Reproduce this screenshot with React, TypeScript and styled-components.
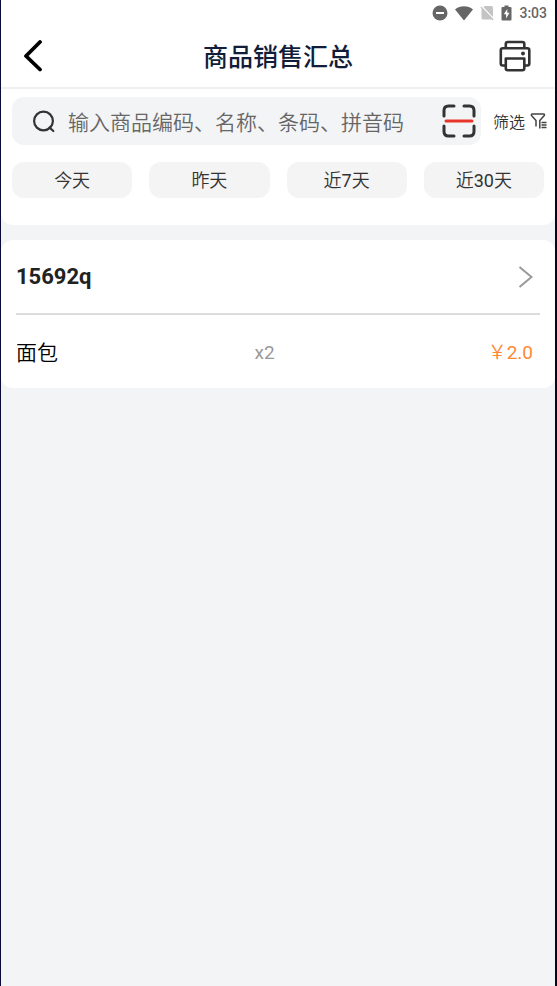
import React from 'react';
import styled, { createGlobalStyle } from 'styled-components';

const GlobalStyle = createGlobalStyle`
  * { box-sizing: border-box; }
  body { margin: 0; background: #f3f4f6; }
  button, input { font: inherit; color: inherit; border: 0; padding: 0; margin: 0; background: none; }
  button { cursor: pointer; }
  svg { display: block; flex: none; }
`;

const Screen = styled.div`
  min-height: 100vh;
  display: flex;
  flex-direction: column;
  border-left: 1px solid #0b0b3a;
  border-right: 2px solid #04061f;
  background: #f3f4f6;
  color: #333;
  font-family: Roboto, 'Noto Sans CJK SC DemiLight', 'Noto Sans CJK SC', sans-serif;
`;

const StatusBar = styled.div`
  display: flex;
  align-items: center;
  justify-content: flex-end;
  height: 25px;
  padding-right: 8px;
  background: #fff;
`;

const StatusIcons = styled.div`
  display: flex;
  align-items: center;
  gap: 7px;
  margin-right: 7px;
`;

const Clock = styled.time`
  font-size: 14px;
  font-weight: 500;
  line-height: 24px;
  padding-top: 1px;
  color: #666;
`;

const Header = styled.header`
  display: grid;
  grid-template-columns: 64px 1fr 64px;
  align-items: center;
  height: 64px;
  padding: 0 8px;
  background: #fff;
  border-bottom: 2px solid #f0f0f2;
`;

const IconButton = styled.button<{ $end?: boolean }>`
  display: flex;
  align-items: center;
  justify-content: ${(p) => (p.$end ? 'flex-end' : 'flex-start')};
  height: 48px;
  padding: 0 16px 0 14px;
`;

const Title = styled.h1`
  margin: 0;
  padding-top: 4px;
  text-align: center;
  font-family: Roboto, 'Noto Sans CJK SC', sans-serif;
  font-size: 25px;
  font-weight: 500;
  line-height: 32px;
  color: #121d3a;
`;

const FilterPanel = styled.section`
  padding: 8px 11px 27px;
  background: #fff;
  border-radius: 0 0 12px 12px;
`;

const SearchRow = styled.div`
  display: flex;
  align-items: center;
  gap: 12px;
  margin-right: -4px;
`;

const SearchBox = styled.label`
  flex: 1;
  min-width: 0;
  display: flex;
  align-items: center;
  height: 48px;
  padding: 0 5px 0 20px;
  border-radius: 12px;
  background: #f3f4f6;
`;

const SearchInput = styled.input`
  flex: 1;
  min-width: 0;
  height: 44px;
  padding-top: 4px;
  margin-left: 12px;
  outline: none;
  font-size: 21px;
  font-weight: 350;
  &::placeholder { color: #666; opacity: 1; }
`;

const ScanButton = styled.button`
  display: flex;
`;

const FilterButton = styled.button`
  display: flex;
  align-items: center;
  gap: 5px;
  font-size: 16px;
  font-weight: 350;
  line-height: 24px;
  white-space: nowrap;
`;

const FilterText = styled.span`
  padding-top: 3px;
`;

const Ranges = styled.div`
  display: grid;
  grid-template-columns: repeat(4, 1fr);
  gap: 17px;
  margin-top: 17px;
`;

const RangeButton = styled.button`
  height: 36px;
  padding-top: 2px;
  border-radius: 12px;
  background: #f4f4f4;
  font-size: 18px;
  line-height: 24px;
`;

const OrderCard = styled.section`
  margin-top: 15px;
  padding: 0 15px;
  background: #fff;
  border-radius: 12px;
`;

const OrderHeader = styled.button`
  display: flex;
  align-items: center;
  justify-content: space-between;
  width: 100%;
  height: 75px;
  padding-right: 7px;
  border-bottom: 2px solid #dcdcdc;
  color: #222;
  font-size: 22px;
  font-weight: 700;
`;

const ItemRow = styled.div`
  display: grid;
  grid-template-columns: 12fr auto 13fr;
  align-items: center;
  height: 73px;
  padding: 2px 7px 0 0;
`;

const ItemName = styled.span`
  font-size: 21px;
  font-weight: 350;
  line-height: 28px;
  color: #000;
`;

const Quantity = styled.span`
  font-size: 19px;
  line-height: 28px;
  color: #999;
`;

const Price = styled.span`
  text-align: right;
  font-size: 19px;
  line-height: 28px;
  color: #ff8833;
`;

const DoNotDisturbIcon = () => (
  <svg width="16" height="16" viewBox="0 0 16 16" aria-hidden="true">
    <circle cx="8" cy="8" r="7.5" fill="#666" />
    <path d="M4 8h8" stroke="#fff" strokeWidth="2" />
  </svg>
);

const WifiIcon = () => (
  <svg width="18" height="16" viewBox="0 0 18 16" aria-hidden="true">
    <path d="M0 4.500C5 .2 13 .2 18 4.500L9 15.500z" fill="#666" />
  </svg>
);

const NoSimIcon = () => (
  <svg width="14" height="16" viewBox="0 0 14 16" aria-hidden="true">
    <path d="M4.500 1h7q1.500 0 1.500 1.500v12H3q-1.500 0-1.500-1.500V4z" fill="#c4c4c4" />
    <path d="M1.500 1L14 14.300" stroke="#fff" strokeWidth="1.500" />
    <path d="M.8 1.800L13.200 15" stroke="#c4c4c4" strokeWidth="1.200" />
  </svg>
);

const BatteryIcon = () => (
  <svg width="11" height="16" viewBox="0 0 11 16" aria-hidden="true">
    <path d="M3.500 .5h4v1.500H9.500q1 0 1 1V14.500q0 1-1 1h-8q-1 0-1-1V3q0-1 1-1h2z" fill="#666" />
    <path d="M6.300 4L2.800 9.300h2.300V13.500L8.500 7.800H6.300z" fill="#fff" />
  </svg>
);

const BackIcon = () => (
  <svg width="20" height="32" viewBox="0 0 20 32" aria-hidden="true">
    <path d="M17 2L3 16L17 29.500" fill="none" stroke="#000" strokeWidth="3.800" strokeLinecap="round" strokeLinejoin="round" />
  </svg>
);

const PrinterIcon = () => (
  <svg width="32" height="32" viewBox="0 0 32 32" fill="none" stroke="#333" strokeWidth="2.600" strokeLinejoin="round" aria-hidden="true">
    <path d="M6.800 8V4q0-2 2-2h14.500q2 0 2 2v4" />
    <path d="M6.500 25.500H3.800q-2 0-2-2V10.300q0-2 2-2h24.500q2 0 2 2v13.200q0 2-2 2h-2.800" />
    <path d="M6.800 18.500h18.500v9.800q0 2-2 2H8.800q-2 0-2-2z" />
    <circle cx="24" cy="13.500" r="1.900" fill="#333" stroke="none" />
  </svg>
);

const SearchIcon = () => (
  <svg width="24" height="24" viewBox="0 0 24 24" fill="none" stroke="#333" strokeWidth="2.200" aria-hidden="true">
    <circle cx="11.500" cy="12" r="9.400" />
    <path d="M17.500 18.500L21.300 22" strokeLinecap="round" />
  </svg>
);

const ScanIcon = () => (
  <svg width="34" height="34" viewBox="0 0 34 34" fill="none" strokeWidth="3" strokeLinecap="round" aria-hidden="true">
    <path d="M2 12V6.500Q2 2 6.500 2H12M22 2h5.500Q32 2 32 6.500V12M32 22v5.500Q32 32 27.500 32H22M12 32H6.500Q2 32 2 27.500V22" stroke="#333" />
    <path d="M4 17h26" stroke="#e8352c" />
  </svg>
);

const FunnelIcon = () => (
  <svg width="18" height="18" viewBox="0 0 18 18" fill="none" stroke="#444" strokeWidth="1.500" aria-hidden="true">
    <path d="M6 14.500V8.500L1.500 3.500Q1 2 2.300 2H13.500Q15 2 14.300 3.500L9.800 8.500V16.500" strokeLinejoin="round" />
    <path d="M11.500 10.500h5M11.500 13h5M11.500 15.500h5" />
  </svg>
);

const ChevronIcon = () => (
  <svg width="15" height="24" viewBox="0 0 15 24" aria-hidden="true">
    <path d="M1.500 2L13.500 12L1.500 22" fill="none" stroke="#999" strokeWidth="2" />
  </svg>
);

const ranges = ['今天', '昨天', '近7天', '近30天'];

export default function App() {
  return (
    <Screen>
      <GlobalStyle />
      <StatusBar>
        <StatusIcons>
          <DoNotDisturbIcon />
          <WifiIcon />
          <NoSimIcon />
          <BatteryIcon />
        </StatusIcons>
        <Clock>3:03</Clock>
      </StatusBar>
      <Header>
        <IconButton aria-label="返回">
          <BackIcon />
        </IconButton>
        <Title>商品销售汇总</Title>
        <IconButton $end aria-label="打印">
          <PrinterIcon />
        </IconButton>
      </Header>
      <main>
        <FilterPanel>
          <SearchRow>
            <SearchBox>
              <SearchIcon />
              <SearchInput type="text" aria-label="搜索商品" placeholder="输入商品编码、名称、条码、拼音码" />
              <ScanButton type="button" aria-label="扫码">
                <ScanIcon />
              </ScanButton>
            </SearchBox>
            <FilterButton type="button">
              <FilterText>筛选</FilterText>
              <FunnelIcon />
            </FilterButton>
          </SearchRow>
          <Ranges>
            {ranges.map((range) => (
              <RangeButton key={range} type="button">{range}</RangeButton>
            ))}
          </Ranges>
        </FilterPanel>
        <OrderCard>
          <OrderHeader type="button">
            15692q
            <ChevronIcon />
          </OrderHeader>
          <ItemRow>
            <ItemName>面包</ItemName>
            <Quantity>x2</Quantity>
            <Price>￥2.0</Price>
          </ItemRow>
        </OrderCard>
      </main>
    </Screen>
  );
}
